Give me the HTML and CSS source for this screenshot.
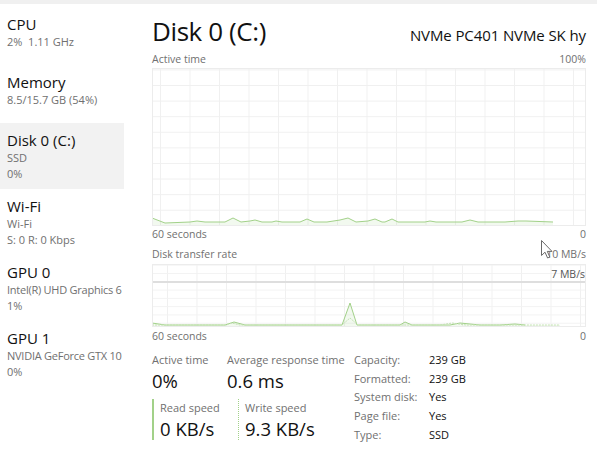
FILE: index.html
```html
<!DOCTYPE html>
<html lang="en">
<head>
<meta charset="utf-8">
<title>Task Manager - Disk 0 (C:)</title>
<link rel="stylesheet" href="styles.css">
</head>
<body>
<div class="topband"></div>
<div class="app">
  <aside class="sidebar">
    <div class="item short">
      <div class="name">CPU</div>
      <div class="sub">2%&nbsp; 1.11 GHz</div>
    </div>
    <div class="item short">
      <div class="name">Memory</div>
      <div class="sub">8.5/15.7 GB (54%)</div>
    </div>
    <div class="item selected">
      <div class="name">Disk 0 (C:)</div>
      <div class="sub">SSD</div>
      <div class="sub">0%</div>
    </div>
    <div class="item">
      <div class="name">Wi-Fi</div>
      <div class="sub">Wi-Fi</div>
      <div class="sub">S: 0 R: 0 Kbps</div>
    </div>
    <div class="item">
      <div class="name">GPU 0</div>
      <div class="sub tight">Intel(R) UHD Graphics 6</div>
      <div class="sub">1%</div>
    </div>
    <div class="item">
      <div class="name">GPU 1</div>
      <div class="sub tight">NVIDIA GeForce GTX 10</div>
      <div class="sub">0%</div>
    </div>
  </aside>

  <main class="main">
    <header class="head">
      <h1 class="title">Disk 0 (C:)</h1>
      <div class="model">NVMe PC401 NVMe SK hy</div>
    </header>

    <div class="labels"><span>Active time</span><span>100%</span></div>
    <div class="chart chart-active">
      <svg class="plot" viewBox="152 68 434 158" width="434" height="158" preserveAspectRatio="none">
        <polygon class="area" points="152,218 165,223 190,222 197,221 205,222 225,222 233,218 241,222 250,221 255,220 262,222 272,222 276,221 282,222 300,222 307,219 314,222 327,222 340,220 348,218 356,222 368,221 375,219 382,222 385,222 392,219 398,222 425,222 430,221 436,222 462,222 470,220 478,222 493,222 505,222 518,221 526,221 553,222 553,226 152,226"/>
        <polyline class="line" points="152,218 165,223 190,222 197,221 205,222 225,222 233,218 241,222 250,221 255,220 262,222 272,222 276,221 282,222 300,222 307,219 314,222 327,222 340,220 348,218 356,222 368,221 375,219 382,222 385,222 392,219 398,222 425,222 430,221 436,222 462,222 470,220 478,222 493,222 505,222 518,221 526,221 553,222"/>
      </svg>
    </div>
    <div class="labels after"><span>60 seconds</span><span>0</span></div>

    <div class="labels gap"><span>Disk transfer rate</span><span>10 MB/s</span></div>
    <div class="chart chart-rate">
      <div class="scale-line"></div>
      <span class="scale">7 MB/s</span>
      <svg class="plot" viewBox="152 264 434 63" width="434" height="63" preserveAspectRatio="none">
        <polygon class="area" points="152,323 165,325 200,325 225,325 234,322 245,325 290,325 300,325 342,325 350,303 357,325 400,325 405,322 412,325 450,325 460,323 470,324 480,325 500,325 515,324 525,325 560,325 560,327 152,327"/>
        <polyline class="line" points="152,323 165,325 200,325 225,325 234,322 245,325 290,325 300,325 342,325 350,303 357,325 400,325 405,322 412,325 450,325 460,323 470,324 480,325 500,325 515,324 525,325"/>
        <polyline class="line dashed" points="152,325 225,325 232,323 240,325 342,325 350,318 358,325 440,325 452,323 466,325 525,325 560,325"/>
      </svg>
    </div>
    <div class="labels after2"><span>60 seconds</span><span>0</span></div>

    <section class="stats">
      <div class="stats-left">
        <div class="stat-row first">
          <div class="stat w-active">
            <div class="lbl">Active time</div>
            <div class="val">0%</div>
          </div>
          <div class="stat">
            <div class="lbl">Average response time</div>
            <div class="val">0.6 ms</div>
          </div>
        </div>
        <div class="stat-row speeds">
          <div class="stat read">
            <div class="lbl">Read speed</div>
            <div class="val">0 KB/s</div>
          </div>
          <div class="stat write">
            <div class="lbl">Write speed</div>
            <div class="val">9.3 KB/s</div>
          </div>
        </div>
      </div>
      <dl class="props">
        <dt>Capacity:</dt><dd>239 GB</dd>
        <dt>Formatted:</dt><dd>239 GB</dd>
        <dt>System disk:</dt><dd>Yes</dd>
        <dt>Page file:</dt><dd>Yes</dd>
        <dt>Type:</dt><dd>SSD</dd>
      </dl>
    </section>
  </main>

  <svg class="cursor" width="12" height="19" viewBox="0 0 12 19">
    <path d="M0.5,0.5 L0.5,15.5 L4,12.2 L6.6,18 L8.8,17 L6.3,11.4 L11,11.4 Z" fill="#fff" stroke="#6a6a6a" stroke-width="1"/>
  </svg>
</div>
</body>
</html>
```

FILE: styles.css
```css
* { box-sizing: border-box; }

html, body {
  margin: 0;
  padding: 0;
  background: #ffffff;
  overflow: hidden;
}

body {
  width: 597px;
  height: 450px;
  font-family: "Segoe UI", "Open Sans", "Noto Sans", sans-serif;
  color: #1a1a1a;
}

.topband {
  height: 4px;
  background: #f0f0f0;
}

.app {
  position: relative;
  display: flex;
  height: 446px;
}

/* Sidebar */
.sidebar {
  width: 124px;
  flex: 0 0 124px;
  padding-top: 3px;
  overflow: hidden;
}

.item {
  padding: 7px 0 7px 7px;
  white-space: nowrap;
  overflow: hidden;
}

.item.short { min-height: 58px; }

.item.selected { background: #f2f2f2; }

.name {
  font-size: 15px;
  line-height: 20px;
  color: #111;
}

.sub {
  font-size: 11px;
  line-height: 16px;
  color: #707070;
}

.sub.tight { letter-spacing: -0.25px; }

/* Main */
.main {
  flex: 1;
  padding: 0 11px 0 28px;
  min-width: 0;
}

.head {
  display: flex;
  justify-content: space-between;
  align-items: baseline;
  height: 48px;
  padding-top: 10px;
  white-space: nowrap;
}

.title {
  margin: 0;
  font-weight: 400;
  font-size: 26px;
  letter-spacing: -0.4px;
  line-height: 34px;
  color: #111;
  flex: 0 0 auto;
}

.model {
  font-size: 15px;
  letter-spacing: -0.1px;
  color: #111;
}

.labels {
  display: flex;
  justify-content: space-between;
  font-size: 10.5px;
  line-height: 14px;
  color: #707070;
}

.labels.after { margin-top: 1px; }
.labels.after2 { margin-top: 2px; }
.labels.gap { margin-top: 6px; }

.chart {
  position: relative;
  border: 1px solid #ececec;
  background-color: #fff;
  overflow: hidden;
}

.chart-active {
  margin-top: 2px;
  height: 158px;
  background-image:
    linear-gradient(#f0f0f0 1px, transparent 1px),
    linear-gradient(90deg, #f0f0f0 1px, transparent 1px);
  background-size: 29.5px 15.6px;
  background-position: 7px 16px;
}

.chart-rate {
  margin-top: 3px;
  height: 63px;
  background-image:
    linear-gradient(#f2f2f2 1px, transparent 1px),
    linear-gradient(90deg, #f0f0f0 1px, transparent 1px);
  background-size: 29.5px 8.3px;
  background-position: 14px 8px;
}

.plot {
  position: absolute;
  left: -1px;
  top: -1px;
  display: block;
}

.area { fill: rgba(150, 205, 125, 0.12); stroke: none; }
.line { fill: none; stroke: #a2d189; stroke-width: 1; }
.line.dashed { stroke: #c4e2b4; stroke-dasharray: 2 1; }

.scale-line {
  position: absolute;
  left: 0;
  right: 0;
  top: 16px;
  height: 2px;
  background: #dedede;
}

.scale {
  position: absolute;
  right: 0;
  top: 2px;
  font-size: 10.5px;
  line-height: 14px;
  color: #555;
}

/* Stats */
.stats {
  display: grid;
  grid-template-columns: 202px auto;
  margin-top: 10px;
}

.stat-row { display: flex; }

.stat-row.first .val { margin-top: 2px; }

.stat-row.speeds { margin-top: 6px; }

.w-active { width: 75px; }

.lbl {
  font-size: 11px;
  line-height: 14px;
  color: #707070;
  white-space: nowrap;
}

.val {
  font-size: 18.5px;
  line-height: 24px;
  color: #111;
  white-space: nowrap;
}

.read {
  width: 86px;
  border-left: 2px solid #a2d189;
  padding: 2px 0 0 6px;
  height: 41px;
}

.write {
  border-left: 1px dotted #a2d189;
  padding: 2px 0 0 6px;
  height: 41px;
}

.read .val, .write .val { margin-top: 2px; }

.props {
  margin: -3px 0 0 0;
  display: grid;
  grid-template-columns: 75px auto;
  grid-auto-rows: 18.75px;
  align-items: center;
  font-size: 11px;
}

.props dt { color: #707070; }
.props dd { margin: 0; color: #111; }

.cursor {
  position: absolute;
  left: 541px;
  top: 236px;
}
```
